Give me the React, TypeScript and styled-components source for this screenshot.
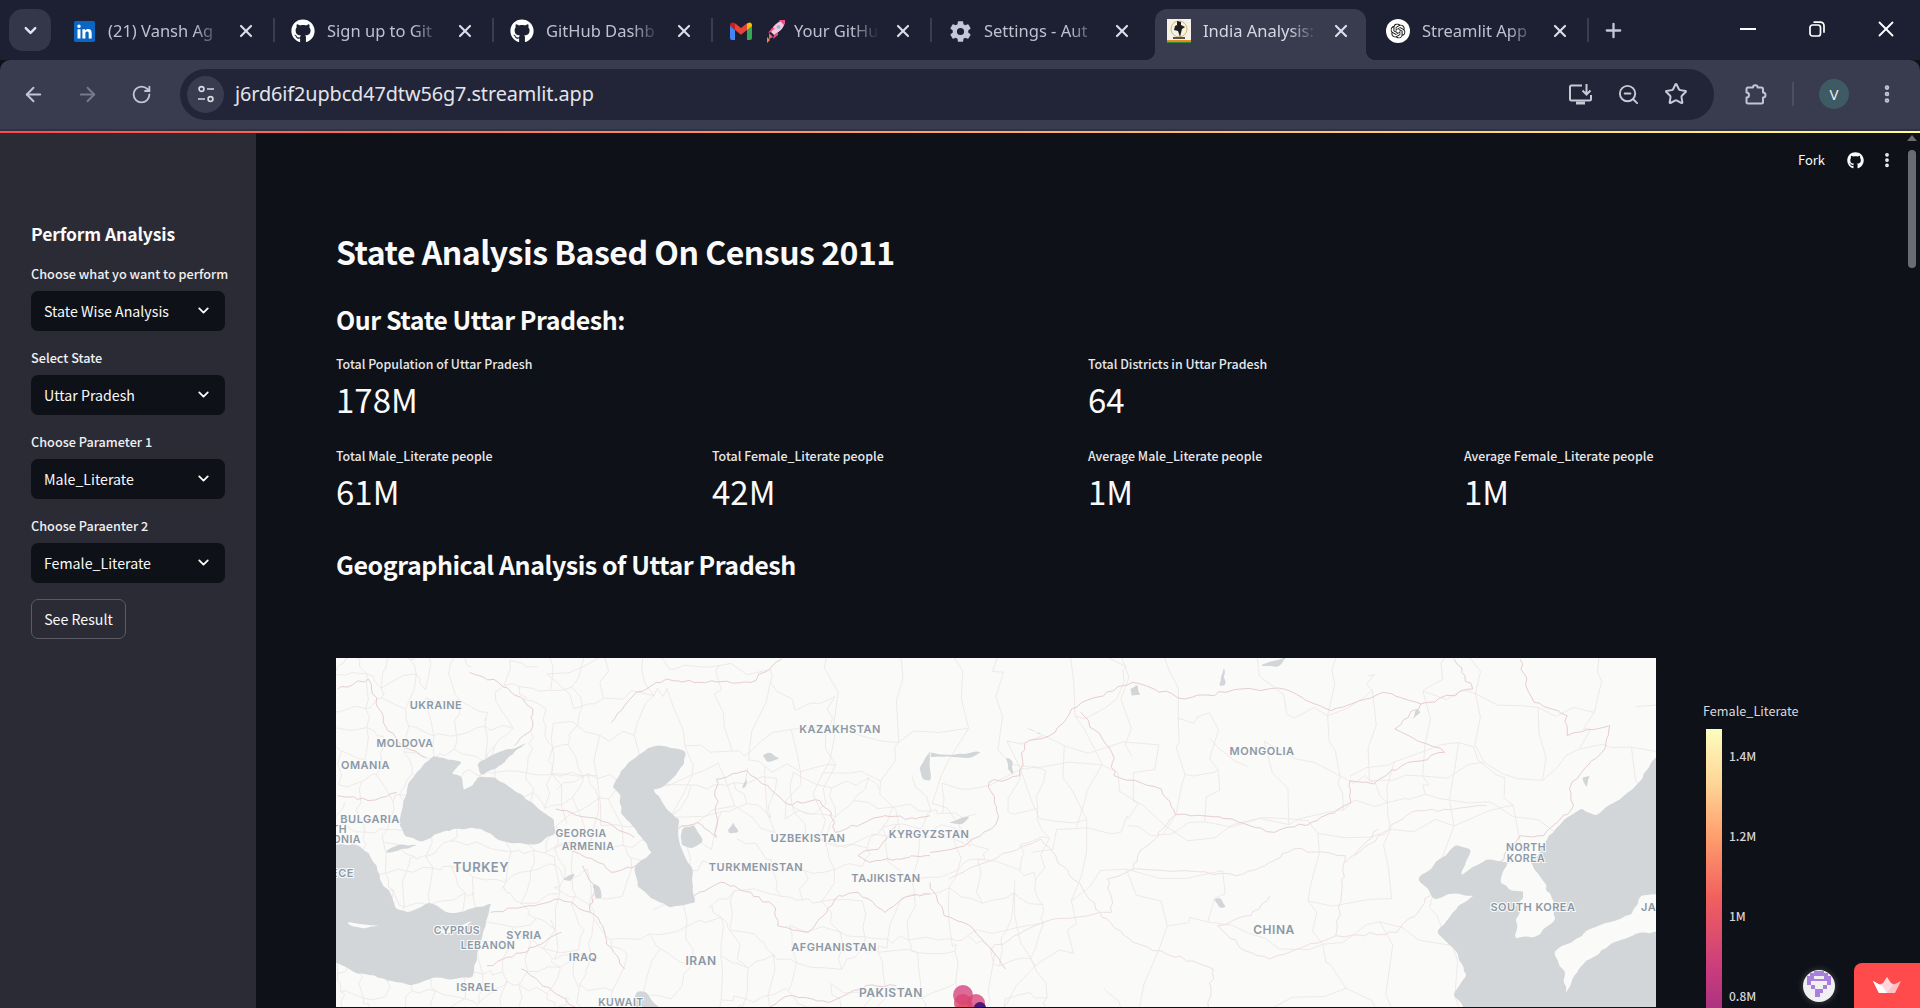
import React from "react";
import styled, { createGlobalStyle } from "styled-components";
import { FaGithub } from "react-icons/fa";
import { SiOpenai } from "react-icons/si";
import { IoSettingsSharp } from "react-icons/io5";
import { ArrowLeft, ArrowRight, RotateCw, ChevronDown, Star, ZoomOut, EllipsisVertical, Plus, X } from "lucide-react";

const ST = `"Noto Sans CJK JP", "Source Sans Pro", "Noto Sans", sans-serif`;
const UI = `"Noto Sans", "Open Sans", sans-serif`;

const Global = createGlobalStyle`
  html, body { margin: 0; height: 100%; overflow: hidden; background: #0e1117; }
  #root { height: 100%; }
`;

const Page = styled.div`
  height: 100vh; display: flex; flex-direction: column; background: #0e1117; overflow: hidden;
`;
const TabStrip = styled.div`
  height: 60px; flex: none; display: flex; align-items: flex-start; background: #1d1f32; padding: 9px 0 0 9px; box-sizing: border-box;
`;
const TabSearch = styled.button`
  width: 42px; height: 42px; margin-right: 5px; flex: none; border: 0; border-radius: 14px; background: #34364a; color: #e4e5ee;
  display: flex; align-items: center; justify-content: center; padding: 0;
`;
const Tab = styled.div<{ $active?: boolean; $sep?: boolean }>`
  position: relative; width: 219px; height: 51px; flex: none; box-sizing: border-box; padding: 0 19px 7px 16px;
  display: flex; align-items: center; gap: 12px; color: ${p => (p.$active ? "#d6d7e2" : "#bfc1cf")};
  background: ${p => (p.$active ? "#393b4f" : "transparent")};
  border-radius: ${p => (p.$active ? "12px 12px 0 0" : "0")};
  ${p => p.$active ? "margin: 0 4px; width: 211px; padding-left: 12px; padding-right: 15px;" : ""}
  ${p => p.$sep ? `&::after { content: ""; position: absolute; right: 0; top: 9px; width: 2px; height: 24px; background: #3a3c50; }` : ""}
  ${p => p.$active ? `
    &::before { content: ""; position: absolute; left: -10px; bottom: 0; width: 10px; height: 10px; background: radial-gradient(circle at 0 0, transparent 10px, #393b4f 10.5px); }
    &::after { content: ""; position: absolute; right: -10px; bottom: 0; width: 10px; height: 10px; background: radial-gradient(circle at 100% 0, transparent 10px, #393b4f 10.5px); }
  ` : ""}
`;
const TabIcon = styled.span`
  width: 24px; height: 24px; flex: none; display: flex; align-items: center; justify-content: center; color: #fff;
`;
const TabTitle = styled.span`
  flex: 1; min-width: 0; overflow: hidden; white-space: nowrap; font: 400 16.5px/24px ${UI}; display: flex; align-items: center; gap: 8px;
  -webkit-mask-image: linear-gradient(90deg, #000 calc(100% - 30px), transparent calc(100% - 2px));
  mask-image: linear-gradient(90deg, #000 calc(100% - 30px), transparent calc(100% - 2px));
  svg { flex: none; margin-left: 1px; }
`;
const TabClose = styled.span`
  width: 20px; height: 20px; flex: none; display: flex; align-items: center; justify-content: center; color: #dcdde8;
`;
const NewTab = styled.span`
  width: 48px; height: 42px; flex: none; display: flex; align-items: center; justify-content: center; color: #c5c7d8;
`;
const WinControls = styled.div`
  margin: -9px 0 0 auto; display: flex; color: #fff;
`;
const WinButton = styled.span`
  width: 69px; height: 58px; display: flex; align-items: center; justify-content: center;
`;
const Toolbar = styled.div`
  height: 71px; flex: none; box-sizing: border-box; background: #393b4f; border-radius: 10px 10px 0 0; border-bottom: 2px solid #303244;
  display: flex; align-items: center; padding: 0 0 1px 11px; color: #bfc1cf;
`;
const NavButton = styled.span<{ $dim?: boolean }>`
  width: 44px; height: 44px; margin-right: 10px; flex: none; display: flex; align-items: center; justify-content: center;
  color: ${p => (p.$dim ? "#777a8c" : "#c3c5d3")};
`;
const Address = styled.div`
  width: 1534px; height: 51px; margin-left: 7px; flex: none; box-sizing: border-box; background: #222437; border-radius: 26px;
  display: flex; align-items: center; padding: 0 26px 0 7px;
`;
const SiteInfo = styled.span`
  width: 37px; height: 37px; flex: none; border-radius: 50%; background: #393b4f; display: flex; align-items: center; justify-content: center; color: #d8d9e4;
`;
const Url = styled.span`
  margin-left: 11px; flex: 1; font: 400 19.85px/26px ${UI}; color: #e3e4ec; letter-spacing: -0.1px;
`;
const AddressIcons = styled.div`
  display: flex; align-items: center; gap: 24px; color: #c8c9d4;
`;
const ToolIcons = styled.div`
  flex: 1; display: flex; align-items: center; color: #c3c5d3;
`;
const Extension = styled.span`
  margin-left: 29px; width: 24px; display: flex; justify-content: center;
`;
const ToolSep = styled.span`
  width: 2px; height: 24px; margin-left: 25px; background: #4c4e62;
`;
const Avatar = styled.span`
  width: 30px; height: 30px; margin-left: 25px; border-radius: 50%; background: #3e5b63; color: #e9edf0; display: flex; align-items: center; justify-content: center;
  font: 400 15px/1 ${UI};
`;
const MenuIcon = styled.span`
  margin-left: 27px; display: flex; color: #c3c5d3;
`;
const Deco = styled.div`
  height: 2px; flex: none; background: linear-gradient(90deg, #ff4b4b, #fffd80);
`;
const AppBody = styled.div`
  flex: 1; min-height: 0; display: flex; position: relative; overflow: hidden; font-family: ${ST};
`;
const Sidebar = styled.aside`
  width: 256px; flex: none; box-sizing: border-box; background: #2a2b35; padding: 88px 31px 0; display: flex; flex-direction: column; color: #fafafa;
`;
const SideTitle = styled.h2`
  margin: 0 0 17px; font: 600 17.5px/26px ${ST}; letter-spacing: -0.1px; color: #fafafa;
`;
const Field = styled.div`
  margin-bottom: 17px; display: flex; flex-direction: column; gap: 7px;
`;
const FieldLabel = styled.label`
  font: 500 12.7px/20px ${ST}; color: #f0f0f2; white-space: nowrap;
`;
const Select = styled.div`
  height: 40px; box-sizing: border-box; background: #0e1117; border-radius: 7px; padding: 0 13px 1px; display: flex; align-items: center; justify-content: space-between;
  font: 400 14.2px/20px ${ST}; color: #fafafa;
`;
const ResultButton = styled.button`
  width: 95px; height: 40px; margin-top: -1px; box-sizing: border-box; background: #2a2b35; border: 1px solid #5a5b66; border-radius: 7px; color: #fafafa; font: 400 14.2px/20px ${ST}; padding: 0 0 1px;
`;
const Main = styled.main`
  flex: 1; min-width: 0; padding: 99px 0 0 80px; color: #fafafa;
`;
const H1 = styled.h1`
  margin: 0; font: 600 32px/38px ${ST}; letter-spacing: -0.5px; color: #fafafa;
`;
const H2 = styled.h2`
  margin: 33px 0 0; font: 600 25px/32px ${ST}; letter-spacing: -0.45px; color: #fafafa;
`;
const H3 = styled(H2)`
  margin-top: 34px;
`;
const Metrics = styled.div<{ $cols: number }>`
  display: grid; grid-template-columns: repeat(${p => p.$cols}, ${p => 1504 / p.$cols}px); margin-top: ${p => (p.$cols === 2 ? "19px" : "24px")};
`;
const Metric = styled.div`
  display: flex; flex-direction: column;
`;
const MetricLabel = styled.span`
  font: 500 12.4px/20px ${ST}; color: #e8e8ea;
`;
const MetricValue = styled.span`
  margin-top: 3px; margin-bottom: 1px; font: 400 33px/44px ${ST}; color: #fafafa;
`;
const Chart = styled.div`
  margin-top: 78px; display: flex; align-items: flex-start;
`;
const MapFrame = styled.svg`
  width: 1320px; height: 349px; flex: none; display: block; background: #fafaf8;
`;
const Legend = styled.div`
  margin: 45px 0 0 47px; display: flex; flex-direction: column;
`;
const LegendTitle = styled.span`
  font: 400 12.7px/16px ${ST}; color: #d8d9de;
`;
const LegendBar = styled.svg`
  width: 110px; height: 290px; margin: 10px 0 0 3px; display: block;
`;
const TopActions = styled.div`
  position: absolute; top: 15px; right: 24px; height: 24px; display: flex; align-items: center; color: #fafafa; font: 400 13px/24px ${ST};
`;
const ForkLink = styled.span`
  margin-right: 22px;
`;
const MoreIcon = styled.span`
  margin-left: 14px; display: flex;
`;
const ScrollTrack = styled.div`
  position: absolute; top: 0; right: 0; bottom: 0; width: 16px; background: #0e1117;
`;
const ScrollArrow = styled.span`
  position: absolute; top: 2px; left: 3px; width: 0; height: 0; border: 5px solid transparent; border-top: 0; border-bottom: 6px solid #6b6c71;
`;
const ScrollThumb = styled.span`
  position: absolute; top: 17px; left: 4px; width: 8px; height: 118px; border-radius: 4px; background: #6b6c71;
`;
const CreatorBadge = styled.div`
  position: absolute; right: 85px; bottom: 6px; width: 32px; height: 32px; border-radius: 50%; background: #f0eff2; box-shadow: 0 0 6px rgba(255,255,255,.25); display: flex; align-items: center; justify-content: center;
`;
const StreamlitBadge = styled.div`
  position: absolute; right: 0; bottom: 0; width: 66px; height: 45px; background: #ff4b4b; border-radius: 8px 0 0 0; display: flex; align-items: center; justify-content: center;
`;

/* ---------- map helpers ---------- */
type P = [number, number];
const rng = (s0: number) => {
  let seed = Math.abs(Math.round(s0)) % 233280;
  return () => (seed = (seed * 9301 + 49297) % 233280) / 233280;
};
const blob = (pts: P[], jit = 7) => {
  const r = rng(pts[0][0] * 3 + pts[0][1] * 17 + 5);
  const fine: P[] = [];
  pts.forEach((a, i) => {
    const b = pts[(i + 1) % pts.length];
    const n = Math.max(1, Math.ceil(Math.hypot(b[0] - a[0], b[1] - a[1]) / 14));
    for (let k = 0; k < n; k++) {
      const j = k === 0 ? 0.3 : 1;
      fine.push([a[0] + ((b[0] - a[0]) * k) / n + (r() - 0.5) * jit * j, a[1] + ((b[1] - a[1]) * k) / n + (r() - 0.5) * jit * j]);
    }
  });
  const mid = (a: P, b: P): P => [(a[0] + b[0]) / 2, (a[1] + b[1]) / 2];
  const s = mid(fine[fine.length - 1], fine[0]);
  let d = `M${s[0].toFixed(1)},${s[1].toFixed(1)}`;
  fine.forEach((p, i) => {
    const m = mid(p, fine[(i + 1) % fine.length]);
    d += `Q${p[0].toFixed(1)},${p[1].toFixed(1)} ${m[0].toFixed(1)},${m[1].toFixed(1)}`;
  });
  return d + "Z";
};
const line = (pts: P[]) => {
  const r = rng(pts[0][0] * 7 + pts[0][1] * 13 + 3);
  let d = `M${pts[0][0]},${pts[0][1]}`;
  for (let i = 1; i < pts.length; i++) {
    const [a, b] = [pts[i - 1], pts[i]];
    const n = Math.max(2, Math.ceil(Math.hypot(b[0] - a[0], b[1] - a[1]) / 16));
    for (let k = 1; k <= n; k++) {
      const j = k === n ? 0 : 10;
      d += `L${(a[0] + ((b[0] - a[0]) * k) / n + (r() - 0.5) * j).toFixed(1)},${(a[1] + ((b[1] - a[1]) * k) / n + (r() - 0.5) * j).toFixed(1)}`;
    }
  }
  return d;
};
const mesh = (x0: number, y0: number, x1: number, y1: number, c: number, start: number) => {
  const r = rng(start);
  const nx = Math.ceil((x1 - x0) / c), ny = Math.ceil((y1 - y0) / c);
  const g: P[][] = [];
  for (let i = 0; i <= nx; i++) {
    g[i] = [];
    for (let j = 0; j <= ny; j++) g[i][j] = [x0 + i * c + (r() - 0.5) * c * 0.8, y0 + j * c + (r() - 0.5) * c * 0.8];
  }
  let d = "";
  const seg = (a: P, b: P) => {
    const w = c * 0.3;
    const q = (t: number): string => `${(a[0] + (b[0] - a[0]) * t + (r() - 0.5) * w).toFixed(1)},${(a[1] + (b[1] - a[1]) * t + (r() - 0.5) * w).toFixed(1)}`;
    d += `M${a[0].toFixed(1)},${a[1].toFixed(1)}L${q(0.33)}L${q(0.66)}L${b[0].toFixed(1)},${b[1].toFixed(1)}`;
  };
  for (let i = 0; i <= nx; i++) for (let j = 0; j <= ny; j++) {
    if (i < nx && r() > 0.25) seg(g[i][j], g[i + 1][j]);
    if (j < ny && r() > 0.25) seg(g[i][j], g[i][j + 1]);
  }
  return d;
};

const minorBorders = [
  mesh(336, 659, 560, 1008, 24, 11),
  mesh(560, 780, 1020, 1008, 30, 29),
  mesh(560, 659, 830, 790, 40, 47),
  mesh(830, 659, 1120, 830, 62, 83),
  mesh(1020, 760, 1500, 1008, 62, 101),
  mesh(1120, 659, 1656, 770, 52, 131),
].join("");

const westWater: P[][] = [
  [[180,520],[205,400],[225,370],[270,320],[345,340],[318,375],[345,385],[348,422],[372,410],[385,385],[432,385],[465,410],[520,455],[585,510],[590,550],[540,585],[470,582],[430,565],[395,540],[370,535],[300,545],[240,578],[195,560]],
  [[385,345],[440,310],[515,282],[470,322],[440,352],[395,378]],
  [[738,415],[760,365],[830,298],[870,290],[928,305],[925,345],[905,378],[870,415],[845,420],[865,450],[880,480],[912,510],[910,560],[922,610],[948,660],[952,762],[890,776],[840,748],[802,710],[798,650],[842,610],[800,540],[760,490],[760,440]],
  [[920,540],[950,528],[975,578],[945,598],[918,588]],
  [[145,610],[180,585],[228,590],[180,605]],
  [[0,590],[60,585],[100,610],[122,650],[130,690],[150,720],[170,775],[205,790],[260,762],[310,792],[360,782],[422,762],[408,820],[388,900],[372,985],[320,992],[270,985],[210,1010],[140,988],[60,968],[0,930]],
  [[780,1090],[800,1028],[825,1030],[870,1090]],
  [[608,692],[640,672],[630,695]],
  [[688,702],[702,710],[710,748],[695,750]],
  [[1078,420],[1092,352],[1088,410]],
  [[1130,320],[1150,310],[1175,330],[1140,340]],
  [[1040,545],[1055,520],[1068,550],[1045,555]],
  [[1540,360],[1568,305],[1568,395],[1548,390]],
];
const eastWater: P[][] = [
  [[1560,280],[1490,420],[1410,500],[1382,478],[1345,510],[1310,560],[1275,640],[1222,640],[1180,630],[1125,680],[1147,600],[1115,588],[1035,688],[1070,752],[1100,735],[1152,740],[1120,770],[1075,850],[1120,920],[1137,980],[1110,1040],[1140,1090],[1560,1090]],
  [[700,50],[760,22],[735,55]],
  [[612,110],[622,55],[626,110]],
  [[424,120],[440,105],[445,138],[428,142]],
  [[200,232],[232,250],[236,258]],
  [[0,310],[50,318],[108,308],[90,326],[40,322],[0,326]],
  [[160,325],[176,340],[176,378],[164,360]],
  [[38,522],[85,502],[70,525]],
  [[1020,212],[1032,180],[1040,190]],
  [[1382,385],[1398,380],[1392,415]],
  [[602,752],[618,748],[628,772],[612,775]],
];
const eastLand: P[][] = [
  [[1208,702],[1222,640],[1276,640],[1296,690],[1322,770],[1322,815],[1285,862],[1240,868],[1250,770],[1256,726],[1226,722]],
  [[1560,735],[1505,740],[1490,790],[1450,815],[1400,840],[1362,880],[1322,908],[1342,960],[1348,1032],[1372,968],[1398,930],[1450,880],[1500,852],[1560,850]],
];
const westMajor: P[][] = [
  [[952,740],[1020,700],[1100,730],[1165,780],[1170,830],[1250,850],[1330,740],[1380,730],[1450,790],[1520,740],[1568,735]],
  [[1010,565],[1010,390],[1090,365],[1195,465],[1280,455],[1310,490],[1320,550],[1450,500],[1530,510],[1568,500]],
  [[910,540],[960,520],[1010,565]],
  [[735,220],[800,130],[880,90],[965,100],[1100,100],[1180,30]],
  [[660,650],[692,720],[680,790],[712,830],[722,885],[770,960]],
  [[420,790],[520,770],[600,750],[680,790]],
  [[605,850],[560,880],[500,912],[410,950]],
  [[500,960],[640,1074]],
  [[590,480],[700,510],[795,565]],
  [[610,590],[700,640],[735,670],[800,650]],
  [[365,70],[440,100],[530,180],[530,232],[482,290]],
  [[20,120],[100,90],[145,232],[185,285],[250,325]],
  [[20,440],[100,455],[175,430]],
  [[1150,1074],[1200,1040],[1300,1060],[1400,1010],[1480,1010]],
  [[1480,530],[1440,590],[1380,620],[1410,640],[1480,630],[1568,620]],
];
const eastMajor: P[][] = [
  [[300,180],[430,100],[540,150],[660,120],[750,120],[850,185],[960,130],[1040,165],[985,240],[1090,310],[1000,350],[940,405],[890,395],[892,460],[820,515],[730,550],[640,510],[520,497],[490,420],[390,380],[385,310],[320,190]],
  [[190,380],[125,400],[145,500],[130,540],[60,595],[0,610]],
  [[190,380],[200,285],[265,250],[300,180]],
  [[1040,165],[1150,120],[1110,30]],
  [[1250,30],[1280,160],[1350,200],[1350,260],[1440,230],[1430,300],[1360,400],[1360,480],[1300,560],[1250,560],[1205,640]],
  [[0,700],[30,800],[70,820],[130,900],[160,960]],
  [[1240,712],[1296,686]],
];
const eastLight: P[][] = [
  [[520,497],[440,620],[430,660],[375,690],[385,790],[360,790],[235,570],[40,690]],
  [[430,660],[540,665],[650,680],[720,640],[770,600],[880,620],[860,860],[990,850],[1060,740]],
  [[720,740],[680,800],[610,830],[660,900],[720,930],[860,860]],
  [[950,540],[880,640]],
  [[1180,470],[1020,490],[950,560],[900,620]],
  [[130,900],[240,820],[360,790],[430,880],[600,960],[590,1074]],
];
const labels: { x: number; y: number; t: string; s?: number; a?: "start" | "middle" | "end" }[] = [
  { x: 436, y: 706, t: "UKRAINE" }, { x: 405, y: 744, t: "MOLDOVA", s: 10.5 }, { x: 390, y: 766, t: "OMANIA", a: "end" },
  { x: 370, y: 820, t: "BULGARIA" }, { x: 347, y: 830, t: "TH", s: 10.5, a: "end" }, { x: 361, y: 840, t: "ONIA", s: 10.5, a: "end" },
  { x: 354, y: 874, t: "ECE", a: "end" }, { x: 481, y: 869, t: "TURKEY", s: 13 }, { x: 581, y: 834, t: "GEORGIA", s: 10.5 },
  { x: 588, y: 847, t: "ARMENIA", s: 10.5 }, { x: 840, y: 730, t: "KAZAKHSTAN" }, { x: 808, y: 839, t: "UZBEKISTAN" },
  { x: 929, y: 835, t: "KYRGYZSTAN", s: 11 }, { x: 756, y: 868, t: "TURKMENISTAN" }, { x: 886, y: 879, t: "TAJIKISTAN" },
  { x: 457, y: 931, t: "CYPRUS", s: 10.5 }, { x: 524, y: 936, t: "SYRIA" }, { x: 488, y: 946, t: "LEBANON", s: 10.5 },
  { x: 583, y: 958, t: "IRAQ" }, { x: 701, y: 962, t: "IRAN", s: 12 }, { x: 834, y: 948, t: "AFGHANISTAN" },
  { x: 477, y: 988, t: "ISRAEL" }, { x: 621, y: 1003, t: "KUWAIT", s: 10.5 }, { x: 891, y: 994, t: "PAKISTAN", s: 12 },
  { x: 1262, y: 752, t: "MONGOLIA" }, { x: 1274, y: 931, t: "CHINA", s: 12 }, { x: 1526, y: 848, t: "NORTH", s: 10.5 },
  { x: 1526, y: 859, t: "KOREA", s: 10.5 }, { x: 1533, y: 908, t: "SOUTH KOREA" }, { x: 1641, y: 908, t: "JA", a: "start" },
];

const WEST = "translate(330,650) scale(0.38265,0.33333)";
const EAST = "translate(930,650) scale(0.47194,0.33333)";
const Ns = { vectorEffect: "non-scaling-stroke" } as const;

const GeoMap = () => (
  <MapFrame viewBox="336 659 1320 349" preserveAspectRatio="none">
    <path d={minorBorders} fill="none" stroke="#ece4e5" strokeWidth={0.8} />
    <g transform={WEST}>
      {westMajor.map((p, i) => <path key={i} d={line(p)} fill="none" stroke="#e8cdd2" strokeWidth={1} {...Ns} />)}
      {westWater.map((p, i) => <path key={i} d={blob(p)} fill="#d2d6d9" />)}
      <path d={blob([[45,818],[85,826],[128,830],[85,838],[50,828]], 2)} fill="#fafaf8" />
      <path d={blob([[275,848],[330,835],[372,815],[345,840],[300,855]], 2)} fill="#fafaf8" />
    </g>
    <g transform={EAST}>
      {eastLight.map((p, i) => <path key={i} d={line(p)} fill="none" stroke="#efe0e2" strokeWidth={1} {...Ns} />)}
      {eastMajor.map((p, i) => <path key={i} d={line(p)} fill="none" stroke="#e8cdd2" strokeWidth={1} {...Ns} />)}
      {eastWater.map((p, i) => <path key={i} d={blob(p)} fill="#d2d6d9" />)}
      {eastLand.map((p, i) => <path key={i} d={blob(p, 9)} fill="#fafaf8" />)}
    </g>
    {labels.map(l => (
      <text key={l.t + l.x} x={l.x} y={l.y + 4} textAnchor={l.a ?? "middle"} fontFamily="Inter, Lato, sans-serif" fontWeight={600}
        fontSize={l.s ?? 11} letterSpacing={0.5} fill="#8b98a6" stroke="#fafaf8" strokeWidth={2} paintOrder="stroke">{l.t}</text>
    ))}
    <g fillOpacity={0.8}>
      <circle cx={966} cy={1012} r={10} fill="#f3805f" />
      <circle cx={976} cy={1004} r={9} fill="#d9477a" />
      <circle cx={963} cy={996} r={10} fill="#d3467f" />
      <circle cx={963} cy={1004} r={9} fill="#d9456f" />
      <circle cx={980} cy={1009} r={6} fill="#4b1877" fillOpacity={1} />
    </g>
  </MapFrame>
);

const ColorBar = () => (
  <LegendBar viewBox="0 0 110 290">
    <defs>
      <linearGradient id="magma" x1="0" y1="0" x2="0" y2="1">
        <stop offset="0" stopColor="#fcfdbf" />
        <stop offset="0.18" stopColor="#fed799" />
        <stop offset="0.37" stopColor="#fe9f6d" />
        <stop offset="0.58" stopColor="#f1605d" />
        <stop offset="0.82" stopColor="#cb3d7c" />
        <stop offset="1" stopColor="#a4307f" />
      </linearGradient>
    </defs>
    <rect x="0" y="0" width="16" height="290" fill="url(#magma)" />
    {[["1.4M", 27], ["1.2M", 107], ["1M", 187], ["0.8M", 267]].map(([t, y]) => (
      <text key={t} x="23" y={Number(y) + 5} fontFamily={ST} fontSize="12" fontWeight={500} fill="#d5d6dc">{t}</text>
    ))}
  </LegendBar>
);

/* ---------- logos ---------- */
const LinkedIn = () => (
  <svg width="21" height="21" viewBox="0 0 24 24"><rect width="24" height="24" rx="2" fill="#0a66c2" /><path d="M4 9.5h3.4V20H4zM5.7 4a2 2 0 1 1 0 4 2 2 0 0 1 0-4zM9.6 9.5h3.2v1.5c.6-1 1.8-1.8 3.4-1.8 3.2 0 4 2 4 5V20h-3.4v-5c0-1.3 0-2.9-1.8-2.9s-2 1.4-2 2.8V20H9.6z" fill="#fff" /></svg>
);
const Gmail = () => (
  <svg width="22" height="18" viewBox="0 0 22 18"><path d="M0 3v13a2 2 0 0 0 2 2h3V8z" fill="#4285f4" /><path d="M22 3v13a2 2 0 0 1-2 2h-3V8z" fill="#34a853" /><path d="M17 1.2V8l5-4V3c0-2-2.3-3.2-4-1.8z" fill="#fbbc04" /><path d="M5 8V1.2L11 6l6-4.8V8l-6 4.7z" fill="#ea4335" /><path d="M0 3v1l5 4V1.2L4 .9C2.3-.2 0 1 0 3z" fill="#c5221f" /></svg>
);
const Rocket = () => (
  <svg width="20" height="23" viewBox="0 0 20 23"><path d="M1 17l3 3-3 3z" fill="#f98a2b" /><path d="M3 13l4 4-4 2z" fill="#f06292" /><path d="M5 12c1-5 6-11 14-12 0 8-6 12-11 15z" fill="#f8c9d8" /><path d="M13 0h6c0 2-.5 4-1 5z" fill="#ef4d85" /><circle cx="12.5" cy="7" r="2" fill="#8fb9e8" /><path d="M5 12l-3 1 4-5 3 0zM8 15l-1 4 5-4 0-3z" fill="#ef4d85" /></svg>
);
const IndiaLogo = () => (
  <svg width="24" height="24" viewBox="0 0 24 24">
    <rect width="24" height="24" fill="#f4f2e8" />
    <rect y="21" width="24" height="1.5" fill="#f08a24" /><rect y="22.5" width="24" height="1.5" fill="#2e8b3a" />
    <circle cx="12" cy="10" r="8" fill="none" stroke="#d8b66a" strokeWidth="1" />
    <path d="M10 2l4 1 0 3 4 2-3 2-2 8-2-6-4-1 1-4 2-1z" fill="#1d1d1d" />
    <rect x="6" y="18" width="12" height="2" fill="#555" />
  </svg>
);
const OpenAiTab = () => (
  <svg width="24" height="24" viewBox="0 0 24 24"><circle cx="12" cy="12" r="12" fill="#fff" /><g transform="translate(4.5 4.5) scale(.625)"><SiOpenai size={24} color="#111" /></g></svg>
);
const Tune = () => (
  <svg width="18" height="18" viewBox="0 0 18 18" fill="none" stroke="currentColor" strokeWidth="1.7"><circle cx="4.5" cy="4" r="2.4" /><path d="M10 4h7M1 14h7" /><circle cx="13.5" cy="14" r="2.4" /></svg>
);
const Install = () => (
  <svg width="25" height="23" viewBox="0 0 25 23" fill="none" stroke="currentColor" strokeWidth="2"><path d="M14 2.5H3.5A1.5 1.5 0 0 0 2 4v12a1.5 1.5 0 0 0 1.5 1.5h18A1.5 1.5 0 0 0 23 16v-4" /><path d="M8 18.5h9v3H8z" fill="currentColor" stroke="none" /><path d="M18.5 1v10M14.5 7.5l4 4 4-4" /></svg>
);
const ExtensionIcon = () => (
  <svg width="25" height="25" viewBox="0 0 24 24" fill="none" stroke="currentColor" strokeWidth="2" strokeLinejoin="round"><path d="M3.5 6.5A1.5 1.5 0 0 1 5 5h5a2.3 2.3 0 0 1 4.6 0h3.9a1.5 1.5 0 0 1 1.5 1.5V10a2.5 2.5 0 0 1 0 5v4.5a1.5 1.5 0 0 1-1.5 1.5H5a1.5 1.5 0 0 1-1.5-1.5V15a2.5 2.5 0 0 0 0-5z" /></svg>
);
const Crown = () => (
  <svg width="28" height="17" viewBox="0 0 28 17"><path d="M14 16H6L0 4l9 5z" fill="#fff" /><path d="M6 8l4-2 4-6 4 6 4 2-4 8h-8z" fill="#ffd6dc" /><path d="M28 4l-6 12h-8l6-8z" fill="#ffc0c8" /><path d="M0 4l9 5 5 7H6z" fill="#fff" /></svg>
);
const Pixel = () => (
  <svg width="32" height="32" viewBox="0 0 32 32" shapeRendering="crispEdges"><path d="M11 1h10v5h-5v0h-5zM7 3h4v6h10V3h4v3h3v9h-4v-4H8v4H4V6h3zM8 15h4v4h8v-4h4v4h-4v4h-3v4h-2v0h-3v-4h-0v-4H8z" fill="#a87fdc" fillRule="evenodd" /><rect x="12" y="23" width="3" height="4" fill="#a87fdc" /><rect x="17" y="23" width="3" height="4" fill="#f0eff2" /></svg>
);

const tabs: { icon: React.ReactNode; title: React.ReactNode; sep?: boolean; active?: boolean }[] = [
  { icon: <LinkedIn />, title: "(21) Vansh Ag", sep: true },
  { icon: <FaGithub size={24} />, title: "Sign up to Git", sep: true },
  { icon: <FaGithub size={24} />, title: "GitHub Dashb", sep: true },
  { icon: <Gmail />, title: <><Rocket /><span>Your GitHu</span></>, sep: true },
  { icon: <IoSettingsSharp size={23} color="#c5c7d8" />, title: "Settings - Aut" },
  { icon: <IndiaLogo />, title: "India Analysis:", active: true },
  { icon: <OpenAiTab />, title: "Streamlit App", sep: true },
];

const fields = [
  ["Choose what yo want to perform", "State Wise Analysis"],
  ["Select State", "Uttar Pradesh"],
  ["Choose Parameter 1", "Male_Literate"],
  ["Choose Paraenter 2", "Female_Literate"],
];

export default function App() {
  return (
    <Page>
      <Global />
      <TabStrip>
        <TabSearch><ChevronDown size={19} strokeWidth={3} /></TabSearch>
        {tabs.map((t, i) => (
          <Tab key={i} $active={t.active} $sep={t.sep}>
            <TabIcon>{t.icon}</TabIcon>
            <TabTitle>{t.title}</TabTitle>
            <TabClose><X size={20} strokeWidth={2.6} /></TabClose>
          </Tab>
        ))}
        <NewTab><Plus size={23} strokeWidth={2.4} /></NewTab>
        <WinControls>
          <WinButton><svg width="16" height="2"><rect width="16" height="2" fill="#fff" /></svg></WinButton>
          <WinButton><svg width="16" height="16" viewBox="0 0 16 16" fill="none" stroke="#fff" strokeWidth="1.7"><rect x="1" y="4" width="10.5" height="11" rx="2.5" /><path d="M4.5 1.2h7a3.5 3.5 0 0 1 3.5 3.5v7" /></svg></WinButton>
          <WinButton><X size={26} strokeWidth={1.7} /></WinButton>
        </WinControls>
      </TabStrip>
      <Toolbar>
        <NavButton><ArrowLeft size={23} strokeWidth={2} /></NavButton>
        <NavButton $dim><ArrowRight size={23} strokeWidth={2} /></NavButton>
        <NavButton><RotateCw size={21} strokeWidth={2.1} /></NavButton>
        <Address>
          <SiteInfo><Tune /></SiteInfo>
          <Url>j6rd6if2upbcd47dtw56g7.streamlit.app</Url>
          <AddressIcons>
            <Install />
            <ZoomOut size={23} strokeWidth={2} />
            <Star size={24} strokeWidth={2} />
          </AddressIcons>
        </Address>
        <ToolIcons>
          <Extension><ExtensionIcon /></Extension>
          <ToolSep />
          <Avatar>V</Avatar>
          <MenuIcon><EllipsisVertical size={22} strokeWidth={3} /></MenuIcon>
        </ToolIcons>
      </Toolbar>
      <Deco />
      <AppBody>
        <Sidebar>
          <SideTitle>Perform Analysis</SideTitle>
          {fields.map(([label, value]) => (
            <Field key={label}>
              <FieldLabel>{label}</FieldLabel>
              <Select>{value}<ChevronDown size={17} strokeWidth={2.6} /></Select>
            </Field>
          ))}
          <ResultButton>See Result</ResultButton>
        </Sidebar>
        <Main>
          <H1>State Analysis Based On Census 2011</H1>
          <H2>Our State Uttar Pradesh:</H2>
          <Metrics $cols={2}>
            <Metric><MetricLabel>Total Population of Uttar Pradesh</MetricLabel><MetricValue>178M</MetricValue></Metric>
            <Metric><MetricLabel>Total Districts in Uttar Pradesh</MetricLabel><MetricValue>64</MetricValue></Metric>
          </Metrics>
          <Metrics $cols={4}>
            <Metric><MetricLabel>Total Male_Literate people</MetricLabel><MetricValue>61M</MetricValue></Metric>
            <Metric><MetricLabel>Total Female_Literate people</MetricLabel><MetricValue>42M</MetricValue></Metric>
            <Metric><MetricLabel>Average Male_Literate people</MetricLabel><MetricValue>1M</MetricValue></Metric>
            <Metric><MetricLabel>Average Female_Literate people</MetricLabel><MetricValue>1M</MetricValue></Metric>
          </Metrics>
          <H3>Geographical Analysis of Uttar Pradesh</H3>
          <Chart>
            <GeoMap />
            <Legend>
              <LegendTitle>Female_Literate</LegendTitle>
              <ColorBar />
            </Legend>
          </Chart>
        </Main>
        <TopActions>
          <ForkLink>Fork</ForkLink>
          <FaGithub size={17} />
          <MoreIcon><EllipsisVertical size={18} strokeWidth={3} /></MoreIcon>
        </TopActions>
        <ScrollTrack><ScrollArrow /><ScrollThumb /></ScrollTrack>
        <CreatorBadge><Pixel /></CreatorBadge>
        <StreamlitBadge><Crown /></StreamlitBadge>
      </AppBody>
    </Page>
  );
}
